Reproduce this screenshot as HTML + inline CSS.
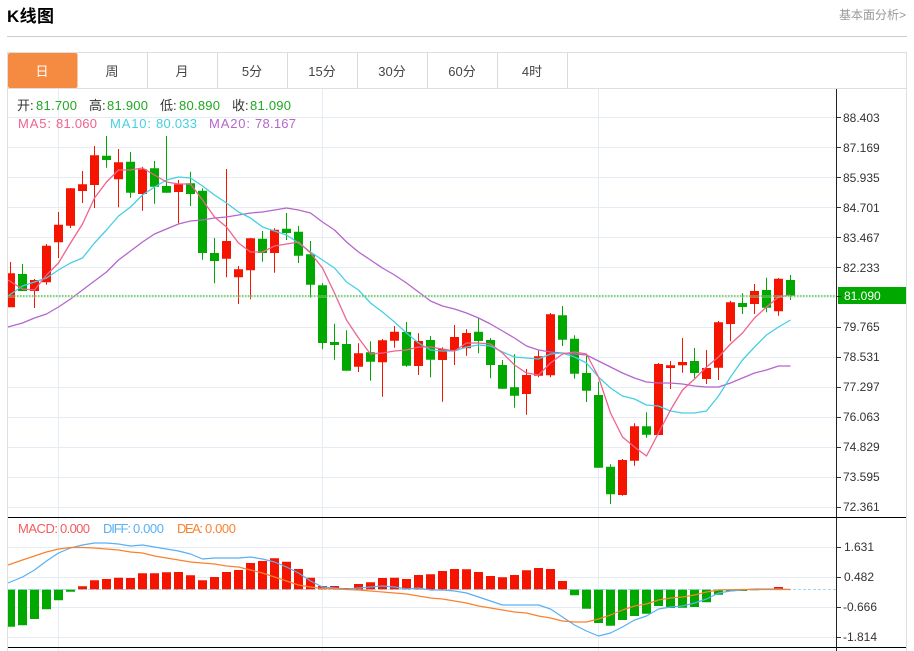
<!DOCTYPE html>
<html lang="zh"><head><meta charset="utf-8"><title>K线图</title>
<style>
html,body{margin:0;padding:0;background:#fff}
body{width:914px;height:651px;overflow:hidden}
svg{display:block}
text{font-family:"Liberation Sans","Noto Sans CJK SC",sans-serif}
</style></head><body>
<svg width="914" height="651" viewBox="0 0 914 651" xmlns="http://www.w3.org/2000/svg">
<rect width="914" height="651" fill="#fff"/>
<text x="7" y="22" font-size="17" font-weight="700" fill="#000" textLength="47">K线图</text>
<text x="839" y="19" font-size="12" fill="#999" textLength="67">基本面分析&gt;</text>
<path d="M7 36.5H907" stroke="#ccc" fill="none"/>
<!-- frame -->
<path d="M7.5 52V651M906.5 52V651M7 52.5H907M7 88.5H907" stroke="#dfdfdf" fill="none"/>
<path d="M147.5 53V88M217.5 53V88M287.5 53V88M357.5 53V88M427.5 53V88M497.5 53V88M567.5 53V88" stroke="#d9d9d9" fill="none"/>
<rect x="8" y="53" width="69.500" height="35" rx="2" fill="#f58b40"/>
<g font-size="13" text-anchor="middle" fill="#444">
<text x="42" y="76" fill="#fff">日</text>
<text x="112" y="76">周</text>
<text x="182" y="76">月</text>
<text x="252" y="76">5分</text>
<text x="322" y="76">15分</text>
<text x="392" y="76">30分</text>
<text x="462" y="76">60分</text>
<text x="532" y="76">4时</text>
</g>
<!-- grid -->
<path d="M8 117.500H837M8 147.500H837M8 177.500H837M8 207.500H837M8 237.500H837M8 267.500H837M8 327.500H837M8 357.500H837M8 387.500H837M8 417.500H837M8 447.500H837M8 477.500H837M8 507.500H837M8 547.500H837M8 577.500H837M8 607.500H837M8 637.500H837M58.500 89V651M322.500 89V651M598.500 89V651" stroke="#e5ecf3" fill="none"/>
<!-- candles -->
<path stroke="#f51400" fill="none" d="M10.500 262V307M34.500 279V308M46.500 244V284.700M58.500 212V258M70.500 188V228M82.500 171V203M94.500 146V208M118.500 149V207.300M142.500 166.700V210.700M178.500 180V223.300M226.500 169V277.300M238.500 266V304M250.500 238V299.300M274.500 228.300V272.700M358.500 343.300V372M382.500 339V396.700M394.500 326V347.700M418.500 333.300V375M442.500 347.300V401.700M454.500 325V365M466.500 329.300V355.700M526.500 369V414.700M538.500 350.700V377.300M550.500 313V377.300M622.500 459V495.700M634.500 423.300V465.700M658.500 363V435M670.500 361V389M682.500 338V372.700M706.500 350V384M718.500 321V380M730.500 300.700V341.300M754.500 284V314M778.500 278V315.700"/>
<path fill="#f51400" d="M8 273.300h7V307.300h-7zM30 280h9V291h-9zM42 245.700h9V282.300h-9zM54 224.700h9V242.300h-9zM66 188.300h9V225.700h-9zM78 184.300h9V191h-9zM90 155.300h9V185h-9zM114 162.300h9V179.300h-9zM138 169.300h9V194h-9zM174 184.300h9V192h-9zM222 241h9V258.700h-9zM234 269.300h9V277.300h-9zM246 238.300h9V270.300h-9zM270 229.700h9V253h-9zM354 353.300h9V366.700h-9zM378 340.300h9V362.300h-9zM390 331.700h9V340.700h-9zM414 341h9V366h-9zM438 349h9V360h-9zM450 337h9V350h-9zM462 333h9V348.300h-9zM522 375h9V394h-9zM534 356.300h9V375.700h-9zM546 314.300h9V375.300h-9zM618 460h9V495h-9zM630 426.300h9V460.700h-9zM654 364h9V435h-9zM666 365.300h9V368h-9zM678 362h9V365.300h-9zM702 368h9V379h-9zM714 322.300h9V367.700h-9zM726 302.300h9V324h-9zM750 291h9V304h-9zM774 278.700h9V311.300h-9z"/>
<path stroke="#00a800" fill="none" d="M22.500 264V291M106.500 136V167.700M130.500 152V197.700M154.500 161V203.700M166.500 136V192.700M190.500 171.700V206M202.500 188.300V259.700M214.500 238V283.300M262.500 231V261.700M286.500 213V240M298.500 226V263M310.500 241V297.700M322.500 283.300V349.300M334.500 323.700V359.700M346.500 330.300V370.700M370.500 341.300V380.700M406.500 322V366.700M430.500 336V377.300M478.500 317.700V353.300M490.500 338V378.300M502.500 360V388.700M514.500 354.300V407.700M562.500 306V346M574.500 335.300V378.700M586.500 355.700V402M598.500 381.700V467.700M610.500 464.300V504M646.500 412.300V437.700M694.500 348V378M742.500 293.300V314M766.500 277.700V312.300M790.500 275V300"/>
<path fill="#00a800" d="M18 274h9V291h-9zM102 155.700h9V160h-9zM126 161.700h9V192.700h-9zM150 168.300h9V186.700h-9zM162 186h9V192.700h-9zM186 183.300h9V194h-9zM198 190.700h9V253h-9zM210 253h9V261h-9zM258 238.700h9V253h-9zM282 228.700h9V233h-9zM294 231.700h9V255.700h-9zM306 254.300h9V284.700h-9zM318 285.300h9V343h-9zM330 342h9V345h-9zM342 344h9V370.700h-9zM366 352.300h9V361.700h-9zM402 332h9V365.700h-9zM426 340h9V359.700h-9zM474 331.700h9V341h-9zM486 340h9V365h-9zM498 365h9V388.700h-9zM510 387.300h9V395.700h-9zM558 315.300h9V339.700h-9zM570 338.700h9V373.700h-9zM582 373h9V390.700h-9zM594 395h9V467.700h-9zM606 466.700h9V494.300h-9zM642 426.300h9V434.700h-9zM690 361h9V373h-9zM738 303h9V307h-9zM762 290h9V307.700h-9zM786 280h9V295.700h-9z"/>
<!-- MA lines -->
<g fill="none" stroke-width="1.300" stroke-linejoin="round">
<polyline stroke="#b566cc" points="8,327 22.500,323 34.500,318 46.500,314 58.500,307 70.500,299 82.500,290 94.500,281 106.500,272 118.500,260 130.500,251 142.500,242 154.500,234 166.500,229 178.500,224 190.500,221 202.500,220 214.500,218 226.500,217 238.500,215 250.500,213 262.500,212 274.500,210 286.500,208 298.500,210 310.500,213 322.500,222 334.500,230 346.500,242 358.500,252 370.500,260 382.500,268 394.500,275 406.500,283 418.500,292 430.500,301 442.500,306 454.500,309 466.500,313 478.500,318 490.500,324 502.500,331 514.500,338 526.500,346 538.500,350 550.500,352 562.500,353 574.500,354 586.500,355 598.500,361 610.500,367 622.500,373 634.500,378 646.500,382 658.500,383 670.500,383 682.500,384 694.500,386 706.500,387 718.500,387 730.500,383 742.500,378 754.500,373 766.500,370 778.500,366 790.500,366"/>
<polyline stroke="#46cfe3" points="8,296 22.500,286 34.500,282 46.500,278 58.500,270 70.500,263 82.500,258 94.500,243 106.500,230 118.500,216 130.500,207 142.500,195 154.500,187 166.500,180 178.500,177 190.500,178 202.500,186 214.500,195 226.500,203 238.500,212 250.500,218 262.500,227 274.500,231 286.500,235 298.500,243 310.500,252 322.500,260 334.500,268 346.500,282 358.500,290 370.500,303 382.500,312 394.500,322 406.500,333 418.500,343 430.500,350 442.500,351 454.500,351 466.500,347 478.500,345 490.500,346 502.500,352 514.500,357 526.500,358 538.500,359 550.500,354 562.500,353 574.500,357 586.500,363 598.500,377 610.500,388 622.500,396 634.500,399 646.500,405 658.500,406 670.500,411 682.500,413 694.500,413 706.500,411 718.500,396 730.500,377 742.500,360 754.500,347 766.500,335 778.500,327 790.500,320"/>
<polyline stroke="#f0628f" points="8,280 22.500,289 34.500,290 46.500,275 58.500,263 70.500,243 82.500,224 94.500,198 106.500,182 118.500,170 130.500,170 142.500,168 154.500,175 166.500,182 178.500,184 190.500,184 202.500,200 214.500,217 226.500,227 238.500,243 250.500,252 262.500,252 274.500,246 286.500,244 298.500,242 310.500,253 322.500,268 334.500,293 346.500,320 358.500,338 370.500,354 382.500,353 394.500,351 406.500,350 418.500,347 430.500,347 442.500,349 454.500,351 466.500,343 478.500,343 490.500,344 502.500,353 514.500,365 526.500,373 538.500,375 550.500,363 562.500,354 574.500,352 586.500,354 598.500,377 610.500,413 622.500,437 634.500,447 646.500,456 658.500,433 670.500,410 682.500,390 694.500,379 706.500,367 718.500,357 730.500,344 742.500,333 754.500,318 766.500,307 778.500,297 790.500,295"/>
</g>
<!-- last price -->
<path d="M8 296.500H837" stroke="#bfe8bf" stroke-width="3" fill="none" opacity=".35"/>
<path d="M8 296H837" stroke="#2aa52a" stroke-width="1" stroke-dasharray="1.500 1.500" fill="none"/>
<!-- separators -->
<path d="M8 517.500H906M8 647.500H906" stroke="#000" fill="none"/>
<!-- MACD hist -->
<path fill="#f51400" d="M78 586.300h9V589.500h-9zM90 580.300h9V589.500h-9zM102 579h9V589.500h-9zM114 577.700h9V589.500h-9zM126 578h9V589.500h-9zM138 573.300h9V589.500h-9zM150 573.300h9V589.500h-9zM162 572.300h9V589.500h-9zM174 572h9V589.500h-9zM186 575.300h9V589.500h-9zM198 580.300h9V589.500h-9zM210 577h9V589.500h-9zM222 572h9V589.500h-9zM234 570h9V589.500h-9zM246 563h9V589.500h-9zM258 561h9V589.500h-9zM270 558.300h9V589.500h-9zM282 561.700h9V589.500h-9zM294 569h9V589.500h-9zM306 577.700h9V589.500h-9zM318 586h9V589.500h-9zM330 586h9V589.500h-9zM342 588h9V589.500h-9zM354 584h9V589.500h-9zM366 582.300h9V589.500h-9zM378 578h9V589.500h-9zM390 577.700h9V589.500h-9zM402 579h9V589.500h-9zM414 575h9V589.500h-9zM426 574.300h9V589.500h-9zM438 571h9V589.500h-9zM450 569h9V589.500h-9zM462 569.300h9V589.500h-9zM474 572h9V589.500h-9zM486 576h9V589.500h-9zM498 577.300h9V589.500h-9zM510 575h9V589.500h-9zM522 570.300h9V589.500h-9zM534 568h9V589.500h-9zM546 569h9V589.500h-9zM558 581h9V589.500h-9zM762 589h9V589.500h-9zM774 587h9V589.500h-9z"/>
<path fill="#00a800" d="M8 589.500h7V626.700h-7zM18 589.500h9V625.300h-9zM30 589.500h9V619h-9zM42 589.500h9V609.300h-9zM54 589.500h9V600.300h-9zM66 589.500h9V591.700h-9zM570 589.500h9V595.300h-9zM582 589.500h9V608.700h-9zM594 589.500h9V623h-9zM606 589.500h9V625.700h-9zM618 589.500h9V620h-9zM630 589.500h9V616h-9zM642 589.500h9V613.700h-9zM654 589.500h9V606h-9zM666 589.500h9V608h-9zM678 589.500h9V607.700h-9zM690 589.500h9V607h-9zM702 589.500h9V602.300h-9zM714 589.500h9V594.700h-9zM726 589.500h9V591.300h-9zM738 589.500h9V591h-9zM750 589.500h9V590.300h-9z"/>
<path d="M8 589.500H836" stroke="#8fcfe8" stroke-dasharray="3 2" fill="none" opacity=".8"/>
<g fill="none" stroke-width="1.200" stroke-linejoin="round">
<polyline stroke="#5ab0f2" points="8,583 22.500,577 34.500,570 46.500,561 58.500,553 70.500,548 82.500,545 94.500,543 106.500,543 118.500,544 130.500,546 142.500,545 154.500,547 166.500,549 178.500,551 190.500,554 202.500,559 214.500,558 226.500,558 238.500,558 250.500,557 262.500,559 274.500,562 286.500,567 298.500,573 310.500,581 322.500,587 334.500,588 346.500,589 358.500,588 370.500,587 382.500,586 394.500,587 406.500,589 418.500,588 430.500,590 442.500,590 454.500,591 466.500,593 478.500,597 490.500,601 502.500,605 514.500,605 526.500,605 538.500,605 550.500,609 562.500,617 574.500,625 586.500,631 598.500,636 610.500,633 622.500,627 634.500,620 646.500,616 658.500,609 670.500,607 682.500,606 694.500,603 706.500,599 718.500,593 730.500,591 742.500,590 754.500,589 766.500,589 778.500,589 790.500,589.500"/>
<polyline stroke="#f9822e" points="8,565 22.500,560 34.500,556 46.500,552 58.500,549 70.500,547.500 82.500,547.500 94.500,548 106.500,549 118.500,550 130.500,552 142.500,553 154.500,556 166.500,558 178.500,560 190.500,562 202.500,563 214.500,564 226.500,566 238.500,567 250.500,570 262.500,573 274.500,577 286.500,581 298.500,585 310.500,587 322.500,588.500 334.500,589 346.500,589.500 358.500,590 370.500,591 382.500,592 394.500,593 406.500,594 418.500,596 430.500,598 442.500,599 454.500,601 466.500,603 478.500,606 490.500,608 502.500,610 514.500,612 526.500,613 538.500,616 550.500,618 562.500,621 574.500,622 586.500,622 598.500,619 610.500,615 622.500,610 634.500,606 646.500,604 658.500,600 670.500,598 682.500,597 694.500,595 706.500,592 718.500,590 730.500,589.700 742.500,589.500 754.500,589.500 766.500,589.500 778.500,589.500 790.500,589.500"/>
</g>
<!-- axis -->
<rect x="838" y="287" width="68" height="17" fill="#00a800"/>
<path d="M836.500 89V651" stroke="#222" fill="none"/>
<path d="M837 117.500H841M837 147.500H841M837 177.500H841M837 207.500H841M837 237.500H841M837 267.500H841M837 296.500H841M837 327.500H841M837 357.500H841M837 387.500H841M837 417.500H841M837 447.500H841M837 477.500H841M837 507.500H841M837 547.500H841M837 577.500H841M837 607.500H841M837 637.500H841" stroke="#333" fill="none"/>
<g font-size="12" fill="#333">
<text x="843" y="122">88.403</text>
<text x="843" y="152">87.169</text>
<text x="843" y="182">85.935</text>
<text x="843" y="212">84.701</text>
<text x="843" y="242">83.467</text>
<text x="843" y="272">82.233</text>
<text x="844" y="300" fill="#fff">81.090</text>
<text x="843" y="331">79.765</text>
<text x="843" y="361">78.531</text>
<text x="843" y="391">77.297</text>
<text x="843" y="421">76.063</text>
<text x="843" y="451">74.829</text>
<text x="843" y="481">73.595</text>
<text x="843" y="511">72.361</text>
<text x="844" y="551">1.631</text>
<text x="844" y="581">0.482</text>
<text x="843" y="611">-0.666</text>
<text x="843" y="641">-1.814</text>
</g>
<!-- legends -->
<g font-size="13">
<text x="17" y="110" fill="#333">开:</text><text x="36" y="110" fill="#1fa81f" textLength="41">81.700</text>
<text x="89" y="110" fill="#333">高:</text><text x="107" y="110" fill="#1fa81f" textLength="41">81.900</text>
<text x="160" y="110" fill="#333">低:</text><text x="179" y="110" fill="#1fa81f" textLength="41">80.890</text>
<text x="232" y="110" fill="#333">收:</text><text x="250" y="110" fill="#1fa81f" textLength="41">81.090</text>
<text x="18" y="128" fill="#f0628f" textLength="33">MA5:</text><text x="56" y="128" fill="#f0628f" textLength="41">81.060</text>
<text x="110" y="128" fill="#46cfe3" textLength="41">MA10:</text><text x="156" y="128" fill="#46cfe3" textLength="41">80.033</text>
<text x="209" y="128" fill="#b566cc" textLength="41">MA20:</text><text x="255" y="128" fill="#b566cc" textLength="41">78.167</text>
<text x="18" y="533" fill="#f55b5b" textLength="40">MACD:</text><text x="60" y="533" fill="#f55b5b" textLength="30">0.000</text>
<text x="103" y="533" fill="#5ab0f2" textLength="28">DIFF:</text><text x="133" y="533" fill="#5ab0f2" textLength="31">0.000</text>
<text x="177" y="533" fill="#f9822e" textLength="26">DEA:</text><text x="205" y="533" fill="#f9822e" textLength="31">0.000</text>
</g>
</svg>
</body></html>
